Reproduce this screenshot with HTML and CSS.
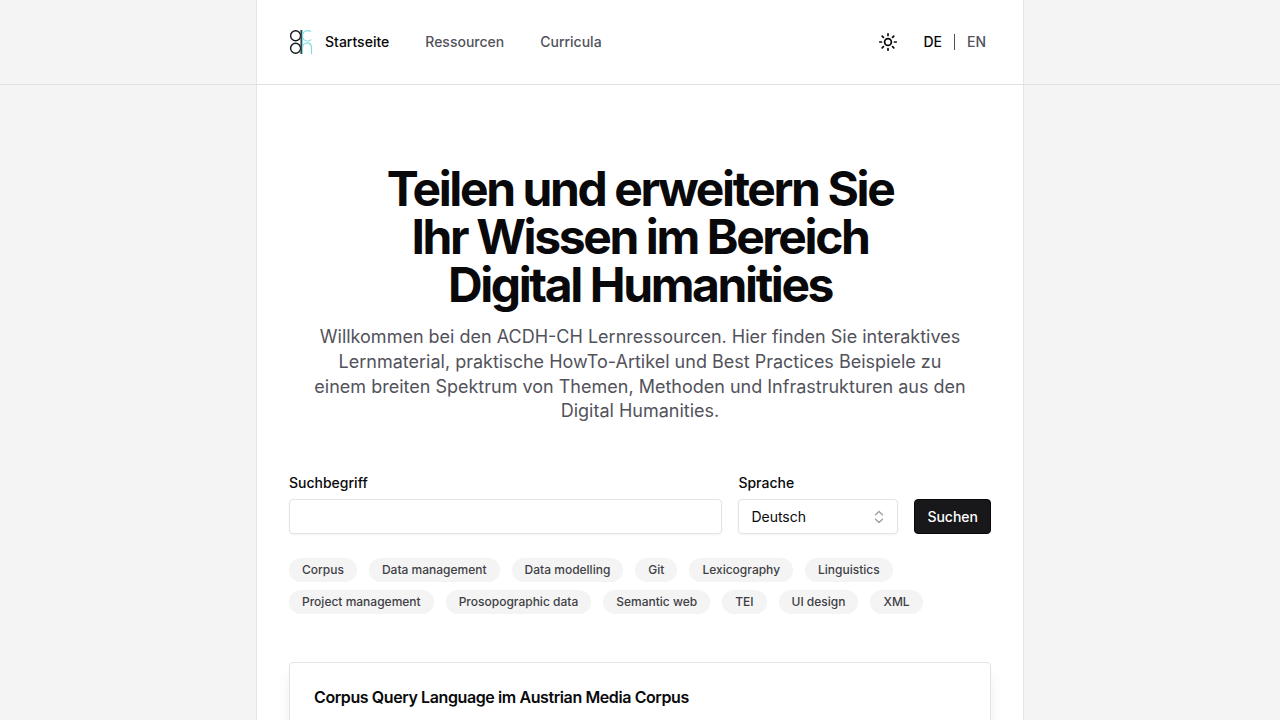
FILE: index.html
```html
<!DOCTYPE html>
<html lang="de">
<head>
<meta charset="utf-8">
<meta name="viewport" content="width=device-width, initial-scale=1">
<title>ACDH-CH Lernressourcen</title>
<link rel="stylesheet" href="styles.css">
</head>
<body>
<header class="header">
  <div class="header-inner column">
    <nav class="nav" aria-label="Hauptnavigation">
      <a class="logo" href="#" aria-label="ACDH-CH">
        <svg width="24" height="24" viewBox="-1 0 24 24" fill="none">
          <g stroke="#7fdce0" stroke-width="1.200">
            <path d="M21 1.600C20 .8 18.500 .6 17.500 .6C14.500 .6 12.500 3 12.500 5.700C12.500 8.500 14.500 11 17.500 11C19 11 20.500 10.500 21.200 9.500"/>
            <path d="M12.500 12V24M12.500 18C12.500 15 14.500 12.900 17.200 12.900C20 12.900 21.500 15 21.500 18V24"/>
          </g>
          <g stroke="#18181b" stroke-width="1.400">
            <circle cx="5.600" cy="5.700" r="5"/>
            <circle cx="5.600" cy="18.300" r="5"/>
          </g>
          <path d="M12.500 0V12" stroke="#7fdce0" stroke-width="1"/>
          <path d="M11.200 0V24" stroke="#3c4648" stroke-width="1.600"/>
        </svg>
      </a>
      <a class="nav-link current" href="#" aria-current="page">Startseite</a>
      <a class="nav-link" href="#">Ressourcen</a>
      <a class="nav-link" href="#">Curricula</a>
    </nav>
    <div class="tools">
      <button class="theme" type="button" aria-label="Farbschema wechseln">
        <svg width="20" height="20" viewBox="0 0 20 20" fill="none" stroke="#09090b" stroke-width="1.700" stroke-linecap="round">
          <circle cx="10" cy="10" r="3.400"/>
          <path d="M10 1.800v1.700M10 16.500v1.700M1.800 10h1.700M16.500 10h1.700M4.200 4.200l1.200 1.200M14.600 14.600l1.200 1.200M4.200 15.800l1.200-1.200M14.600 5.400l1.200-1.200"/>
        </svg>
      </button>
      <div class="locales">
        <a class="locale current" href="#" lang="de">DE</a>
        <span class="divider"></span>
        <a class="locale" href="#" lang="en">EN</a>
      </div>
    </div>
  </div>
</header>
<main class="main column">
  <section class="hero">
    <h1 class="title">Teilen und erweitern Sie Ihr Wissen im Bereich Digital Humanities</h1>
    <p class="lead">Willkommen bei den ACDH-CH Lernressourcen. Hier finden Sie interaktives Lernmaterial, praktische HowTo-Artikel und Best Practices Beispiele zu einem breiten Spektrum von Themen, Methoden und Infrastrukturen aus den Digital Humanities.</p>
  </section>
  <section class="search">
    <form class="form">
      <div class="field">
        <label class="label" for="term">Suchbegriff</label>
        <input class="control" id="term" type="text">
      </div>
      <div class="field">
        <label class="label" for="language">Sprache</label>
        <div class="select">
          <select class="control" id="language"><option>Deutsch</option><option>Englisch</option></select>
          <svg class="select-icon" width="16" height="16" viewBox="0 0 16 16" fill="none" stroke="#a1a1aa" stroke-width="1.500" stroke-linecap="round" stroke-linejoin="round"><path d="M4.500 5.800L8 2.500l3.500 3.300M4.500 10.200L8 13.500l3.500-3.300"/></svg>
        </div>
      </div>
      <button class="submit" type="submit">Suchen</button>
    </form>
    <ul class="tags">
      <li><a class="tag" href="#">Corpus</a></li>
      <li><a class="tag" href="#">Data management</a></li>
      <li><a class="tag" href="#">Data modelling</a></li>
      <li><a class="tag" href="#">Git</a></li>
      <li><a class="tag" href="#">Lexicography</a></li>
      <li><a class="tag" href="#">Linguistics</a></li>
      <li><a class="tag" href="#">Project management</a></li>
      <li><a class="tag" href="#">Prosopographic data</a></li>
      <li><a class="tag" href="#">Semantic web</a></li>
      <li><a class="tag" href="#">TEI</a></li>
      <li><a class="tag" href="#">UI design</a></li>
      <li><a class="tag" href="#">XML</a></li>
    </ul>
  </section>
  <article class="card">
    <h2 class="card-title"><a href="#">Corpus Query Language im Austrian Media Corpus</a></h2>
  </article>
</main>
</body>
</html>
```
FILE: styles.css
```css
*, *::before, *::after { box-sizing: border-box; }

body {
  display: flex;
  flex-direction: column;
  min-height: 100vh;
  margin: 0;
  background: #f4f4f4;
  color: #09090b;
  font-family: Inter, "Liberation Sans", sans-serif;
  font-size: 14px;
  line-height: 20px;
}

a { color: inherit; text-decoration: none; }

.column {
  width: 100%;
  max-width: 768px;
  margin: 0 auto;
  padding: 0 32px;
  border: 0 solid #e4e4e7;
  border-width: 0 1px;
  background: #fff;
}

.header { border-bottom: 1px solid #e0e0e2; }

.header-inner {
  display: flex;
  align-items: center;
  justify-content: space-between;
  padding-top: 24px;
  padding-bottom: 24px;
}

.nav { display: flex; align-items: center; gap: 36px; }
.logo { display: flex; margin-right: -24px; }
.nav-link, .locale { color: #52525b; font-weight: 500; }
.nav-link.current, .locale.current { color: #09090b; }

.tools { display: flex; align-items: center; gap: 17px; }

.theme {
  display: grid;
  place-items: center;
  width: 36px;
  height: 36px;
  padding: 0;
  border: 0;
  background: none;
}

.locales { display: flex; align-items: center; gap: 12px; padding-right: 5px; }
.divider { width: 1px; height: 16px; background: #52525b; }

.main { flex: 1; padding-top: 80px; }

.hero {
  display: grid;
  gap: 16px;
  padding: 0 24px;
  text-align: center;
}

.title {
  margin: 0;
  font-size: 48px;
  font-weight: 700;
  letter-spacing: -0.05em;
  line-height: 48px;
  text-wrap: balance;
}

.lead { margin: 0; color: #52525b; font-size: 18px; line-height: 1.375; }

.search { display: grid; gap: 24px; padding: 49px 0 48px; }

.form {
  display: grid;
  grid-template-columns: 1fr 160px auto;
  align-items: end;
  gap: 16px;
}

.field { display: grid; gap: 6px; }
.label { font-weight: 500; }

.control {
  display: block;
  width: 100%;
  height: 35px;
  padding: 0 12px;
  border: 1px solid #e4e4e7;
  border-radius: 4px;
  background: #fff;
  box-shadow: 0 1px 2px rgb(0 0 0 / 0.05);
  color: #09090b;
  font: inherit;
  appearance: none;
}

.select { position: relative; }
.select-icon { position: absolute; top: 10px; right: 11px; pointer-events: none; }

.submit {
  height: 35px;
  padding: 0 12px;
  border: 1px solid #09090b;
  border-radius: 4px;
  background: #18181b;
  color: #fff;
  font: inherit;
  font-weight: 500;
}

.tags { display: flex; flex-wrap: wrap; gap: 8px 12px; margin: 0; padding: 0; list-style: none; }

.tag {
  display: block;
  padding: 4px 13px;
  border-radius: 12px;
  background: #f4f4f4;
  color: #3f3f46;
  font-size: 12px;
  font-weight: 500;
  line-height: 16px;
}

.card {
  padding: 24px;
  border: 1px solid #e4e4e7;
  border-radius: 4px;
  background: #fff;
  box-shadow: 0 10px 15px -3px rgb(0 0 0 / 0.1), 0 4px 6px -4px rgb(0 0 0 / 0.1);
}

.card-title {
  margin: 0;
  font-size: 16px;
  font-weight: 600;
  letter-spacing: -0.025em;
  line-height: 20px;
}
```
